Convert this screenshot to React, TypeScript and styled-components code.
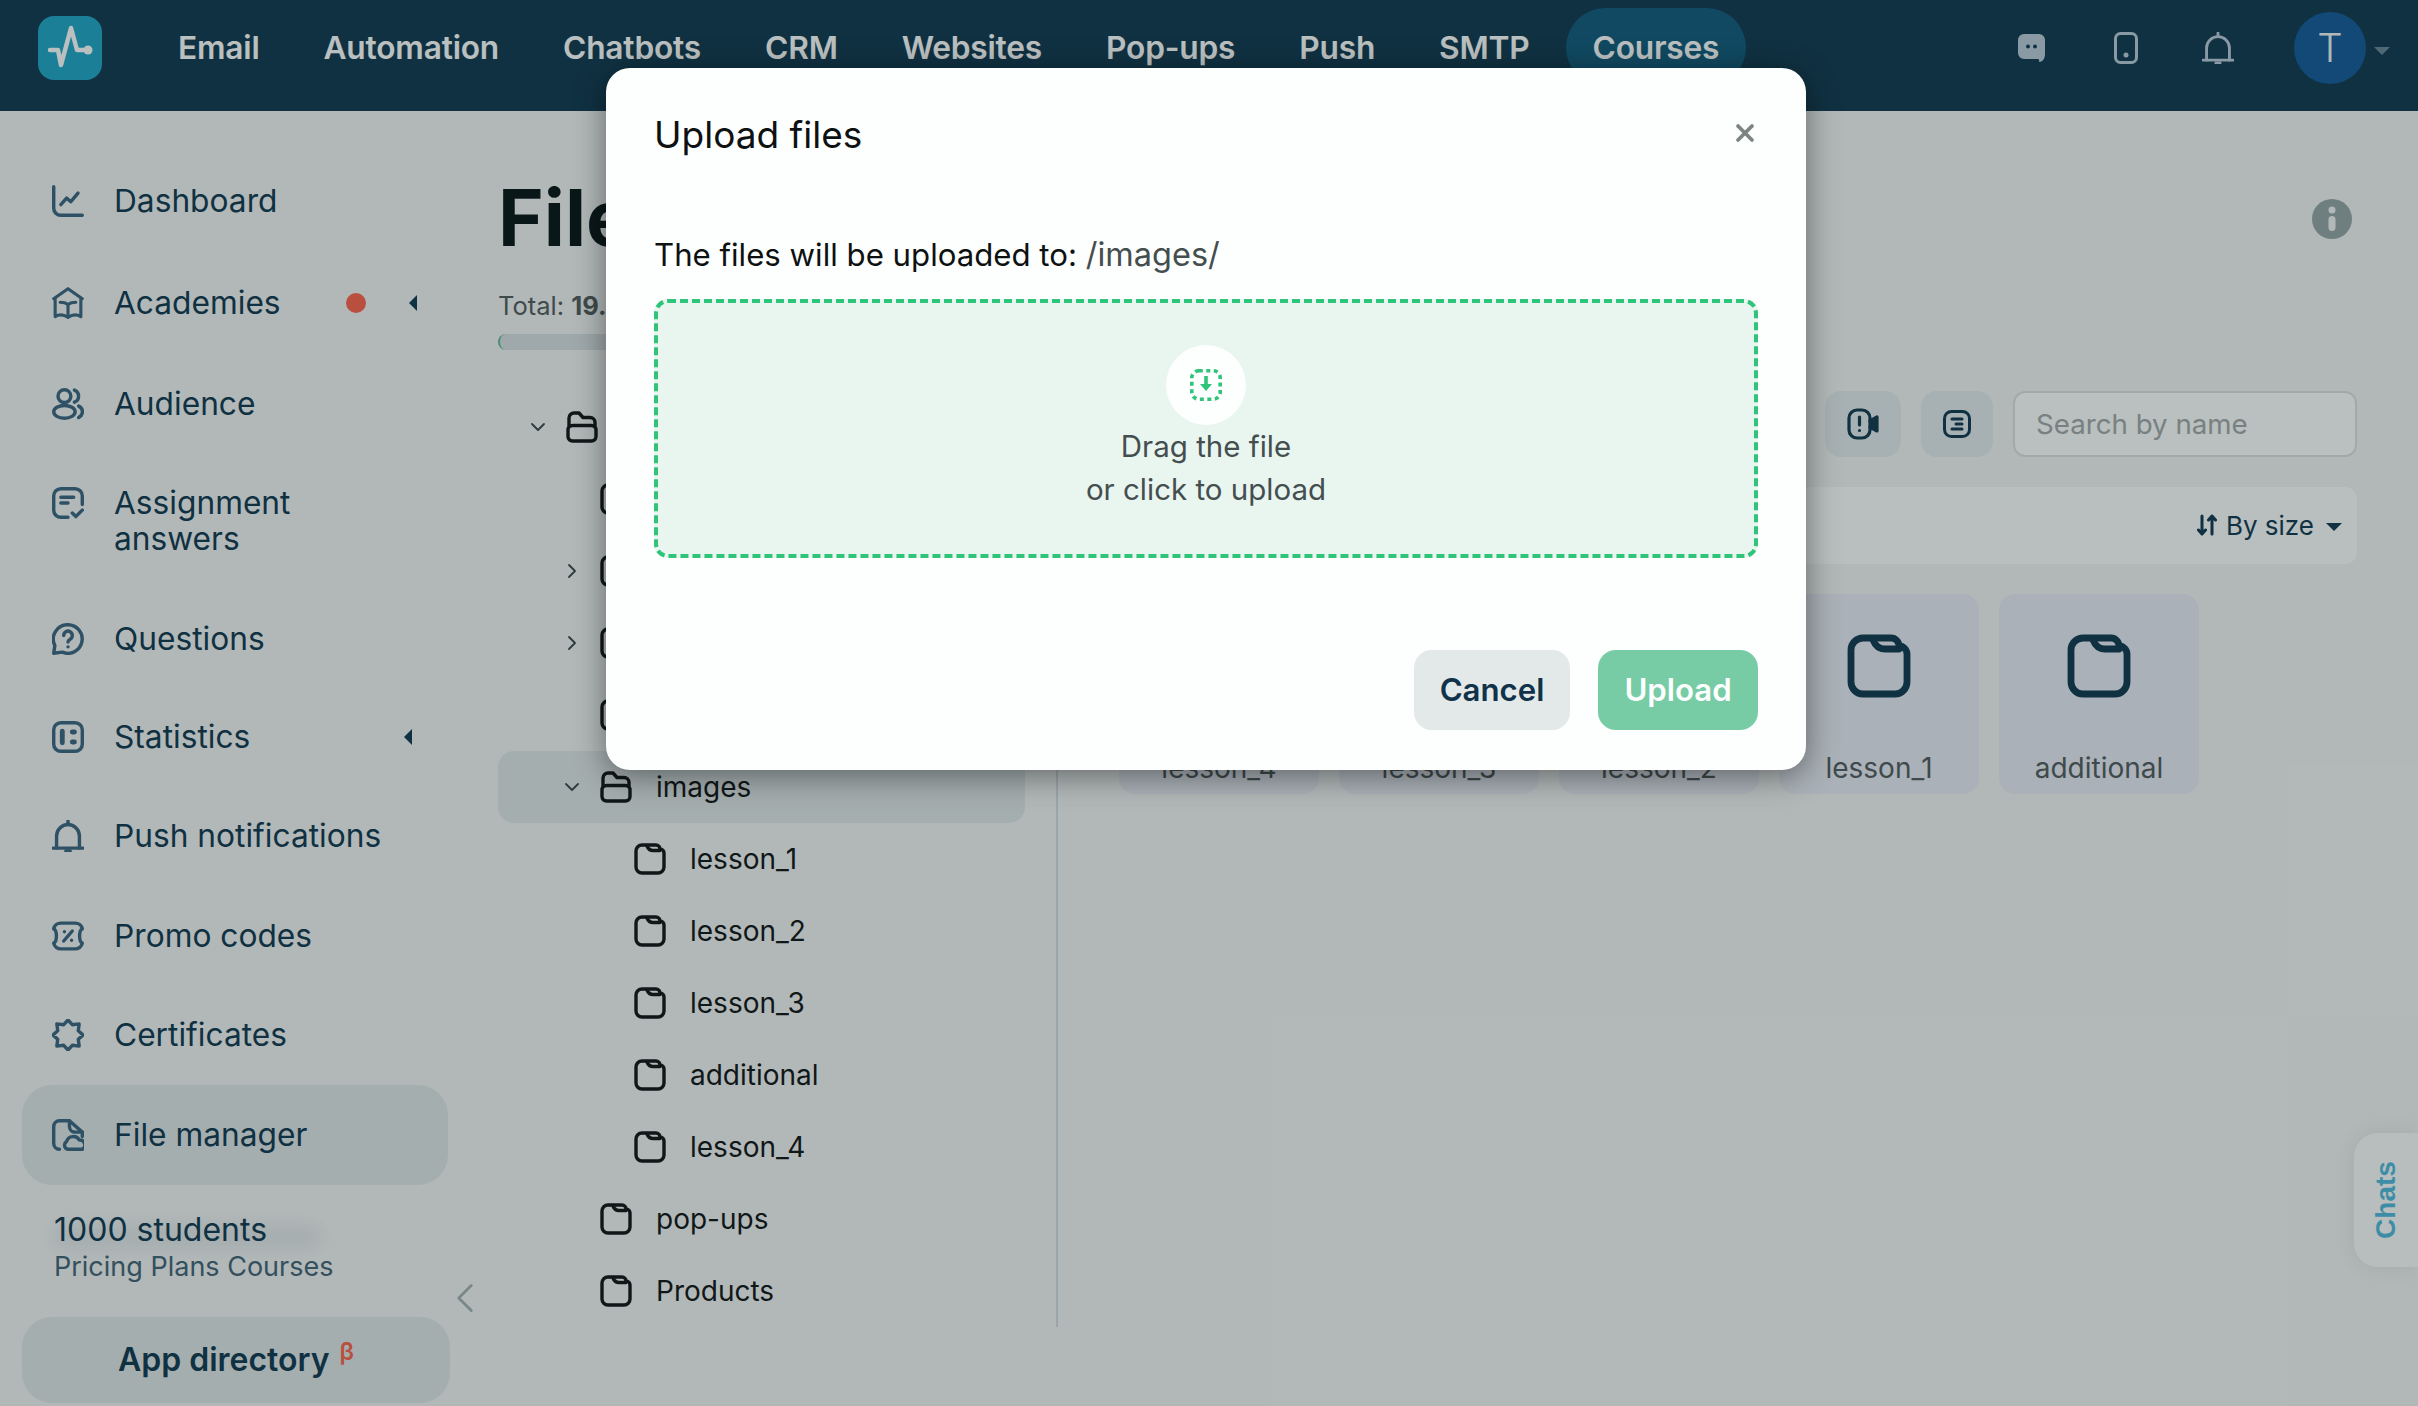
import React, { FC, ReactNode } from 'react';
import styled, { createGlobalStyle } from 'styled-components';
import { ChevronDown, ChevronLeft, ChevronRight, X } from 'lucide-react';

const GlobalStyle = createGlobalStyle`
  html, body {
    margin: 0;
    padding: 0;
    background: #f5f6f6;
  }
  * {
    box-sizing: border-box;
  }
  body {
    font-family: Inter, "Noto Sans", sans-serif;
    color: #163d54;
  }
`;

const Page = styled.div`
  position: relative;
  width: 2418px;
  height: 1406px;
  overflow: hidden;
  background: #f5f6f6;
`;

const TopBar = styled.header`
  display: flex;
  align-items: center;
  height: 111px;
  padding-left: 38px;
  background: #163d54;
`;
const Logo = styled.div`
  display: flex;
  width: 64px;
  height: 64px;
  margin-top: -16px;
  border-radius: 16px;
  background: #24a8c9;
`;
const TopNav = styled.nav`
  display: flex;
  align-items: center;
  margin-left: 44px;
  margin-top: -17px;
`;
const TopLink = styled.a<{ $active?: boolean }>`
  display: flex;
  align-items: center;
  height: 79px;
  padding: 0 ${(p) => (p.$active ? '27px' : '32px')};
  margin-left: ${(p) => (p.$active ? '4px' : '0')};
  border-radius: 40px;
  background: ${(p) => (p.$active ? '#165e7f' : 'transparent')};
  color: #ffffff;
  font-size: 31.7px;
  font-weight: 600;
  letter-spacing: -0.2px;
`;
const TopActions = styled.div`
  display: flex;
  align-items: center;
  margin-left: auto;
  margin-top: -16px;
  padding-right: 28px;
`;
const TopIcon = styled.div<{ $gap: number }>`
  display: flex;
  margin-right: ${(p) => p.$gap}px;
  color: #bdcddb;
`;
const Avatar = styled.div`
  display: flex;
  align-items: center;
  justify-content: center;
  width: 72px;
  height: 72px;
  border-radius: 50%;
  background: #195e9d;
  color: #f2f5f7;
  font-size: 40px;
  font-weight: 300;
`;
const AvatarCaret = styled.div`
  width: 0;
  height: 0;
  margin-left: 8px;
  margin-top: 6px;
  border-left: 8px solid transparent;
  border-right: 8px solid transparent;
  border-top: 8px solid #6c8a99;
`;

const Body = styled.div`
  display: flex;
  height: 1295px;
`;

const Sidebar = styled.aside`
  position: relative;
  flex: 0 0 498px;
  padding: 40.5px 0 0 22px;
`;
const SideList = styled.ul`
  width: 426px;
  margin: 0;
  padding: 0;
  list-style: none;
`;
const SideItem = styled.li<{ $active?: boolean; $offset?: number }>`
  display: flex;
  align-items: flex-start;
  margin-top: ${(p) => p.$offset ?? 0}px;
  padding: 31.75px 31px 31.75px 30px;
  border-radius: 30px;
  background: ${(p) => (p.$active ? '#e3e8ea' : 'transparent')};
  font-size: 31.7px;
  line-height: 36px;
`;
const SideIcon = styled.span`
  display: flex;
  flex: 0 0 32px;
  height: 36px;
  align-items: center;
  margin-right: 30px;
  color: #406984;
`;
const SideLabel = styled.span`
  flex: 1;
`;
const RedDot = styled.span`
  align-self: center;
  width: 20px;
  height: 20px;
  margin-right: 43px;
  border-radius: 50%;
  background: #fc6650;
`;
const SideCaret = styled.span<{ $inset?: number }>`
  align-self: center;
  width: 0;
  height: 0;
  margin-right: ${(p) => p.$inset ?? 0}px;
  border-top: 8px solid transparent;
  border-bottom: 8px solid transparent;
  border-right: 8px solid #163d54;
`;
const Plan = styled.div`
  position: relative;
  margin-top: 26px;
  padding-left: 32px;
  &::before {
    content: '';
    position: absolute;
    left: 30px;
    top: 14px;
    width: 270px;
    height: 24px;
    border-radius: 12px;
    background: #163d54;
    opacity: 0.08;
    filter: blur(9px);
  }
`;
const PlanName = styled.div`
  position: relative;
  font-size: 32px;
  line-height: 38px;
`;
const PlanSub = styled.div`
  font-size: 27px;
  line-height: 36px;
  color: #48687a;
`;
const AppButton = styled.div`
  display: flex;
  align-items: center;
  justify-content: center;
  width: 428px;
  height: 86px;
  margin-top: 32px;
  border-radius: 30px;
  background: #e3e8ea;
  font-size: 32px;
  font-weight: 600;
`;
const Beta = styled.sup`
  margin-left: 10px;
  margin-top: -16px;
  color: #fc6650;
  font-size: 24px;
  line-height: 24px;
`;
const Collapse = styled.div`
  position: absolute;
  left: 440px;
  top: 1162px;
  display: flex;
  color: #a9b4b6;
`;

const Main = styled.main`
  flex: 1;
  padding: 60px 61px 0 0;
`;
const TitleRow = styled.div`
  display: flex;
  align-items: center;
  justify-content: space-between;
  padding-right: 5px;
`;
const Title = styled.h1`
  margin: 0;
  color: #0f1a1b;
  font-size: 78px;
  line-height: 94px;
  font-weight: 700;
`;
const InfoBadge = styled.div`
  display: flex;
  margin-top: 2px;
  color: #98a8a8;
`;
const Total = styled.div`
  margin-top: 23px;
  color: #565f61;
  font-size: 25.5px;
  line-height: 36px;
  b {
    font-weight: 700;
  }
`;
const Usage = styled.div`
  width: 528px;
  height: 16px;
  margin-top: 10px;
  border-left: 2px solid #6cb8a0;
  border-radius: 8px;
  background: #dbe0e2;
`;
const Split = styled.div`
  display: flex;
  margin-top: 40.5px;
`;
const Tree = styled.div`
  flex: 0 0 560px;
  padding-right: 31px;
  border-right: 2px solid #d3dde2;
`;
const TreeRow = styled.div<{ $level: number; $selected?: boolean }>`
  display: flex;
  align-items: center;
  height: 72px;
  padding-left: ${(p) => 32 + p.$level * 34}px;
  border-radius: 16px;
  background: ${(p) => (p.$selected ? '#e3e8ea' : 'transparent')};
  color: #17191b;
  font-size: 28px;
`;
const TreeToggle = styled.span`
  display: flex;
  flex: 0 0 16px;
  width: 16px;
  min-width: 0;
  justify-content: center;
  margin-right: 20px;
  color: #3e4a4d;
  svg {
    flex: none;
  }
`;
const TreeIcon = styled.span`
  display: flex;
  margin-right: 24px;
  color: #17191b;
`;
const Panel = styled.section`
  flex: 1;
  padding-left: 61px;
`;
const Toolbar = styled.div`
  display: flex;
  justify-content: flex-end;
  gap: 20px;
`;
const ToolButton = styled.div<{ $width: number }>`
  display: flex;
  align-items: center;
  justify-content: center;
  width: ${(p) => p.$width}px;
  height: 66px;
  border-radius: 16px;
  background: #e5ebed;
  color: #163d54;
`;
const Search = styled.div`
  display: flex;
  align-items: center;
  width: 344px;
  height: 66px;
  padding-left: 21px;
  border: 2px solid #dce2e3;
  border-radius: 12px;
  background: #ffffff;
  color: #a4abac;
  font-size: 27.7px;
`;
const SortBar = styled.div`
  display: flex;
  align-items: center;
  justify-content: flex-end;
  height: 77px;
  margin-top: 30px;
  padding-right: 15px;
  border-radius: 12px;
  background: #fdfffe;
  font-size: 26px;
`;
const SortIcon = styled.svg`
  margin-right: 9px;
`;
const SortCaret = styled.span`
  width: 0;
  height: 0;
  margin-left: 12px;
  margin-top: 4px;
  border-left: 8px solid transparent;
  border-right: 8px solid transparent;
  border-top: 8px solid #163d54;
`;
const Cards = styled.div`
  display: flex;
  gap: 20px;
  margin-top: 30px;
`;
const Card = styled.div`
  display: flex;
  flex-direction: column;
  align-items: center;
  width: 200px;
  height: 200px;
  padding-top: 40px;
  border-radius: 16px;
  background: #eaecf6;
  color: #163d54;
`;
const CardLabel = styled.div`
  margin-top: 50px;
  color: #565f61;
  font-size: 28px;
  line-height: 40px;
`;

const ChatsTab = styled.div`
  position: absolute;
  right: 0;
  top: 1133px;
  display: flex;
  align-items: center;
  justify-content: center;
  width: 64px;
  height: 134px;
  border-radius: 24px 0 0 24px;
  background: #fdfefe;
  box-shadow: 0 0 24px rgba(20, 60, 70, 0.1);
`;
const ChatsText = styled.span`
  transform: rotate(-90deg);
  color: #56bbdf;
  font-family: "Liberation Sans", sans-serif;
  font-size: 28px;
  font-weight: 700;
`;

const Overlay = styled.div`
  position: absolute;
  inset: 0;
  display: flex;
  align-items: flex-start;
  justify-content: center;
  padding: 68px 6px 0 0;
  background: rgba(0, 20, 20, 0.27);
`;
const Modal = styled.div`
  display: flex;
  flex-direction: column;
  width: 1200px;
  height: 702px;
  padding: 40px 48px 40px 48px;
  border-radius: 24px;
  background: #fdfefe;
  box-shadow: 0 6px 32px rgba(0, 0, 0, 0.45);
`;
const ModalHead = styled.div`
  display: flex;
  align-items: center;
  justify-content: space-between;
  height: 52px;
`;
const ModalTitle = styled.h2`
  margin: 0;
  color: #0d1112;
  font-size: 37px;
  font-weight: 400;
`;
const Close = styled.div`
  display: flex;
  margin-right: -1px;
  margin-top: -2px;
  color: #7d8484;
`;
const Target = styled.div`
  margin-top: 76px;
  color: #0d1112;
  font-size: 31.2px;
  line-height: 38px;
  font-weight: 400;
  span {
    color: #454e4f;
    font-size: 32.500px;
  }
`;
const DropZone = styled.div`
  display: flex;
  flex-direction: column;
  align-items: center;
  height: 259px;
  margin-top: 25px;
  padding-top: 42px;
  border: 4px dashed #2ec47a;
  border-radius: 14px;
  background: #e9f5ef;
  color: #454e4f;
  font-size: 29.5px;
  line-height: 43px;
  text-align: center;
`;
const DropBadge = styled.div`
  display: flex;
  align-items: center;
  justify-content: center;
  width: 80px;
  height: 80px;
  border-radius: 50%;
  background: #fdfefe;
  color: #2ec47a;
`;
const ModalFoot = styled.div`
  display: flex;
  justify-content: flex-end;
  gap: 28px;
  margin-top: auto;
`;
const ModalButton = styled.div<{ $primary?: boolean }>`
  display: flex;
  align-items: center;
  justify-content: center;
  width: ${(p) => (p.$primary ? 160 : 156)}px;
  height: 80px;
  border-radius: 18px;
  background: ${(p) => (p.$primary ? '#77cca5' : '#e2e9e8')};
  color: ${(p) => (p.$primary ? '#fdfefe' : '#10324a')};
  font-size: 31.2px;
  font-weight: 600;
`;

const Icon: FC<{ size?: number; sw?: number; children: ReactNode }> = ({ size = 32, sw = 2.4, children }) => (
  <svg
    width={size}
    height={size}
    viewBox="0.8 0.8 22.4 22.4"
    fill="none"
    stroke="currentColor"
    strokeWidth={sw}
    strokeLinecap="round"
    strokeLinejoin="round"
  >
    {children}
  </svg>
);

const FolderIcon: FC<{ size?: number }> = ({ size = 32 }) => (
  <svg width={size} height={size} viewBox="0 0 32 32" fill="none" stroke="currentColor" strokeWidth="3.4" strokeLinecap="round" strokeLinejoin="round">
    <path d="M2 8a6 6 0 0 1 6-6H22a4 4 0 0 1 4 4 4 4 0 0 1 4 4v14a6 6 0 0 1-6 6H8a6 6 0 0 1-6-6Z" />
    <path d="M13 3c1 2.500 2.500 4.500 6 4.500h7" />
  </svg>
);

const OpenFolderIcon: FC = () => (
  <svg width="32" height="32" viewBox="0 0 32 32" fill="none" stroke="currentColor" strokeWidth="3.4" strokeLinecap="round" strokeLinejoin="round">
    <path d="M3 15V7a5 5 0 0 1 5-5h5l4 4.500h7a5 5 0 0 1 5 5V15" />
    <rect x="2" y="14.500" width="28" height="15.500" rx="4.500" />
  </svg>
);

const DashboardIcon = () => (
  <Icon>
    <path d="M2 2v15a5 5 0 0 0 5 5h15" />
    <path d="M7 14.500l4-4.500 3 2.500 5-6" />
  </Icon>
);
const AcademyIcon = () => (
  <Icon sw={2.2}>
    <path d="M2 9 12 2l10 7" />
    <path d="M3 9v12.500c2.500-1.500 6-1.500 9 .5 3-2 6.500-2 9-.5V9" />
    <path d="M12 22v-9c-2-1.500-3.500-1.500-5.500-1.500M12 13c2-1.500 3.500-1.500 5.500-1.500" />
  </Icon>
);
const AudienceIcon = () => (
  <Icon>
    <circle cx="9.500" cy="6.500" r="4.500" />
    <ellipse cx="9.500" cy="17.500" rx="7.500" ry="4.500" />
    <path d="M16.500 2.300a4.500 4.500 0 0 1 0 8.400M19.500 13.500c3.500 1.800 3.500 6 0 8" />
  </Icon>
);
const AssignmentIcon = () => (
  <Icon>
    <path d="M12 22H7a5 5 0 0 1-5-5V7a5 5 0 0 1 5-5h10a5 5 0 0 1 5 5v6" />
    <path d="M7 8h9M7 12h5" />
    <path d="m15 19 2.500 2.500L22 17" />
  </Icon>
);
const QuestionsIcon = () => (
  <Icon>
    <path d="M12 2a10 10 0 1 1-4 19.200L2 22l.8-5.500A10 10 0 0 1 12 2Z" />
    <path d="M9 9.500a3 3 0 1 1 4.500 2.600c-1 .6-1.500 1-1.500 2" />
    <path d="M12 17.500h.01" />
  </Icon>
);
const StatisticsIcon = () => (
  <Icon>
    <rect x="2" y="2" width="20" height="20" rx="5" />
    <path d="M8 8v8" strokeWidth="3.400" />
    <path d="M15 8.500h1.500M15 15.500h1.500" strokeWidth="3.400" />
  </Icon>
);
const BellIcon: FC<{ size?: number; sw?: number }> = ({ size = 32, sw = 2.4 }) => (
  <Icon size={size} sw={sw}>
    <path d="M1.500 20.500h21" />
    <path d="M4 20.500V12a8 8 0 0 1 16 0v8.500" />
    <path d="M12 1.500V4M10.500 22.500h3" />
  </Icon>
);
const PromoIcon = () => (
  <Icon>
    <path d="M7 3h10a5 5 0 0 1 5 4c-2.500 1-2.500 9 0 10a5 5 0 0 1-5 4H7a5 5 0 0 1-5-4c2.500-1 2.500-9 0-10a5 5 0 0 1 5-4Z" />
    <path d="m15 8.500-6 7M9.500 9h.01M14.500 15h.01" />
  </Icon>
);
const CertificateIcon = () => (
  <Icon>
    <path d="M12 1.500 15 4.800 19.800 4.200 19.200 9 22.500 12 19.200 15 19.800 19.800 15 19.200 12 22.500 9 19.200 4.200 19.800 4.800 15 1.500 12 4.800 9 4.200 4.200 9 4.800Z" />
  </Icon>
);
const FileCloudIcon = () => (
  <Icon>
    <path d="M6 22a4 4 0 0 1-4-4V6a4 4 0 0 1 4-4h7l9 8v3" />
    <path d="M13 2v4a4 4 0 0 0 4 4h5" />
    <path d="M12 22a3 3 0 0 1-1-5.500 5 5 0 0 1 9-1 3.500 3.500 0 0 1 2 6.500Z" />
  </Icon>
);

const sideItems: { label: ReactNode; icon: ReactNode; offset?: number }[] = [
  { label: 'Dashboard', icon: <DashboardIcon /> },
  { label: 'Academies', icon: <AcademyIcon />, offset: 2 },
  { label: 'Audience', icon: <AudienceIcon />, offset: 1.5 },
  { label: <>Assignment<br />answers</>, icon: <AssignmentIcon /> },
  { label: 'Questions', icon: <QuestionsIcon /> },
  { label: 'Statistics', icon: <StatisticsIcon />, offset: -1.5 },
  { label: 'Push notifications', icon: <BellIcon /> },
  { label: 'Promo codes', icon: <PromoIcon /> },
  { label: 'Certificates', icon: <CertificateIcon /> },
];

const treeRows: { name: string; level: number; toggle?: 'open' | 'closed'; selected?: boolean }[] = [
  { name: 'files', level: 0, toggle: 'open' },
  { name: 'audio', level: 1 },
  { name: 'documents', level: 1, toggle: 'closed' },
  { name: 'video', level: 1, toggle: 'closed' },
  { name: 'banners', level: 1 },
  { name: 'images', level: 1, toggle: 'open', selected: true },
  { name: 'lesson_1', level: 2 },
  { name: 'lesson_2', level: 2 },
  { name: 'lesson_3', level: 2 },
  { name: 'additional', level: 2 },
  { name: 'lesson_4', level: 2 },
  { name: 'pop-ups', level: 1 },
  { name: 'Products', level: 1 },
];

const topLinks = ['Email', 'Automation', 'Chatbots', 'CRM', 'Websites', 'Pop-ups', 'Push', 'SMTP'];
const cards = ['lesson_4', 'lesson_3', 'lesson_2', 'lesson_1', 'additional'];

export default function App() {
  return (
    <Page>
      <GlobalStyle />
      <TopBar>
        <Logo>
          <svg width="64" height="64" viewBox="0 0 64 64" fill="none" stroke="#ffffff" strokeWidth="4.500" strokeLinecap="round" strokeLinejoin="round">
            <path d="M12 34h8l3 15 10-37 6 22h11" />
            <circle cx="50" cy="34" r="4.500" fill="#ffffff" stroke="none" />
          </svg>
        </Logo>
        <TopNav>
          {topLinks.map((link) => (
            <TopLink key={link}>{link}</TopLink>
          ))}
          <TopLink $active>Courses</TopLink>
        </TopNav>
        <TopActions>
          <TopIcon $gap={69}>
            <svg width="27" height="28" viewBox="0 0 27 28">
              <path fill="currentColor" d="M6 0h15a6 6 0 0 1 6 6v14c0 4-2 8-6 8 .5-2 0-3-1.500-3H6a6 6 0 0 1-6-6V6a6 6 0 0 1 6-6Z" />
              <circle cx="10" cy="12.500" r="2" fill="#163d54" />
              <circle cx="17" cy="12.500" r="2" fill="#163d54" />
            </svg>
          </TopIcon>
          <TopIcon $gap={64}>
            <svg width="24" height="32" viewBox="0 0 24 32" fill="none" stroke="currentColor" strokeWidth="3">
              <rect x="1.500" y="1.500" width="21" height="29" rx="5" />
              <circle cx="12" cy="23" r="2.500" fill="currentColor" stroke="none" />
            </svg>
          </TopIcon>
          <TopIcon $gap={60}>
            <BellIcon size={32} sw={2} />
          </TopIcon>
          <Avatar>T</Avatar>
          <AvatarCaret />
        </TopActions>
      </TopBar>

      <Body>
        <Sidebar>
          <SideList>
            {sideItems.map((item, i) => (
              <SideItem key={i} $offset={item.offset}>
                <SideIcon>{item.icon}</SideIcon>
                <SideLabel>{item.label}</SideLabel>
                {i === 1 && <RedDot />}
                {i === 1 && <SideCaret />}
                {i === 5 && <SideCaret $inset={5} />}
              </SideItem>
            ))}
            <SideItem $active>
              <SideIcon>
                <FileCloudIcon />
              </SideIcon>
              <SideLabel>File manager</SideLabel>
            </SideItem>
          </SideList>
          <Plan>
            <PlanName>1000 students</PlanName>
            <PlanSub>Pricing Plans Courses</PlanSub>
          </Plan>
          <AppButton>
            App directory<Beta>β</Beta>
          </AppButton>
          <Collapse>
            <ChevronLeft size={50} strokeWidth={1.4} />
          </Collapse>
        </Sidebar>

        <Main>
          <TitleRow>
            <Title>File manager</Title>
            <InfoBadge>
              <svg width="40" height="40" viewBox="0 0 40 40">
                <circle cx="20" cy="20" r="20" fill="currentColor" />
                <circle cx="20" cy="11" r="3.500" fill="#f5f6f6" />
                <rect x="16.500" y="17" width="7" height="15" rx="3.500" fill="#f5f6f6" />
              </svg>
            </InfoBadge>
          </TitleRow>
          <Total>
            Total: <b>19.5 GB</b>
          </Total>
          <Usage />
          <Split>
            <Tree>
              {treeRows.map((row) => (
                <TreeRow key={row.name} $level={row.level} $selected={row.selected}>
                  <TreeToggle>
                    {row.toggle === 'open' && <ChevronDown size={24} strokeWidth={1.8} />}
                    {row.toggle === 'closed' && <ChevronRight size={24} strokeWidth={1.8} />}
                  </TreeToggle>
                  <TreeIcon>{row.toggle === 'open' ? <OpenFolderIcon /> : <FolderIcon />}</TreeIcon>
                  {row.name}
                </TreeRow>
              ))}
            </Tree>
            <Panel>
              <Toolbar>
                <ToolButton $width={76}>
                  <svg width="32" height="32" viewBox="0 0 32 32" fill="none" stroke="currentColor" strokeWidth="3.200" strokeLinecap="round" strokeLinejoin="round">
                    <rect x="2" y="2" width="21" height="28" rx="8" />
                    <path d="M12.500 9v8M12.500 22.500h.01" />
                    <path d="M23 13l7-4v14l-7-4" fill="currentColor" />
                  </svg>
                </ToolButton>
                <ToolButton $width={72}>
                  <svg width="28" height="28" viewBox="0 0 28 28" fill="none" stroke="currentColor" strokeWidth="3" strokeLinecap="round">
                    <rect x="1.500" y="1.500" width="25" height="25" rx="7" />
                    <path d="M9 9h10M13 14h6M9 19h10" />
                  </svg>
                </ToolButton>
                <Search>Search by name</Search>
              </Toolbar>
              <SortBar>
                <SortIcon width="20" height="24" viewBox="0 0 20 24" fill="none" stroke="currentColor" strokeWidth="3" strokeLinecap="round" strokeLinejoin="round">
                  <path d="M5 3v17M1.500 17 5 21l3.500-4" />
                  <path d="M15 21V4M11.500 7 15 3l3.500 4" />
                </SortIcon>
                By size
                <SortCaret />
              </SortBar>
              <Cards>
                {cards.map((name) => (
                  <Card key={name}>
                    <FolderIcon size={64} />
                    <CardLabel>{name}</CardLabel>
                  </Card>
                ))}
              </Cards>
            </Panel>
          </Split>
        </Main>
      </Body>

      <ChatsTab>
        <ChatsText>Chats</ChatsText>
      </ChatsTab>

      <Overlay>
        <Modal>
          <ModalHead>
            <ModalTitle>Upload files</ModalTitle>
            <Close>
              <X size={28} strokeWidth={3.200} />
            </Close>
          </ModalHead>
          <Target>
            The files will be uploaded to: <span>/images/</span>
          </Target>
          <DropZone>
            <DropBadge>
              <svg width="32" height="32" viewBox="0 0 32 32" fill="none" stroke="currentColor" strokeWidth="3.600">
                <rect x="1.800" y="1.800" width="28.400" height="28.400" rx="7" strokeDasharray="4 3.500" />
                <path d="M16 7v9" />
                <path d="M10 15h12l-6 7Z" fill="currentColor" stroke="none" />
              </svg>
            </DropBadge>
            Drag the file
            <br />
            or click to upload
          </DropZone>
          <ModalFoot>
            <ModalButton>Cancel</ModalButton>
            <ModalButton $primary>Upload</ModalButton>
          </ModalFoot>
        </Modal>
      </Overlay>
    </Page>
  );
}
